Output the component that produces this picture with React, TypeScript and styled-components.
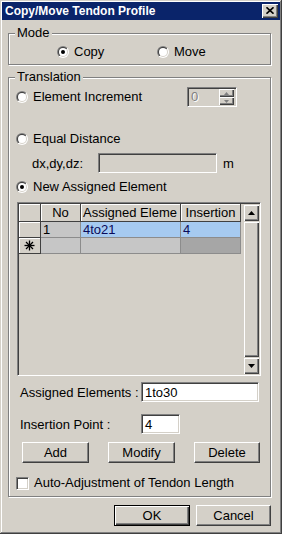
import React, { useId } from "react";
import styled, { createGlobalStyle } from "styled-components";

const GlobalStyle = createGlobalStyle`
  html, body { margin: 0; padding: 0; background: #d4d0c8; }
  body {
    font-family: "Liberation Sans", Arial, sans-serif;
    font-size: 13px;
    color: #000;
  }
  * { box-sizing: border-box; }
`;

const Window = styled.div`
  width: 282px;
  height: 534px;
  background: #d4d0c8;
  padding: 2px;
  box-shadow: inset -1px -1px 0 #404040, inset 1px 1px 0 #d4d0c8,
    inset -2px -2px 0 #808080, inset 2px 2px 0 #fff;
  display: flex;
  flex-direction: column;
`;

const TitleBar = styled.div`
  height: 18px;
  background: #0a246a;
  color: #fff;
  display: flex;
  align-items: center;
  justify-content: space-between;
  padding: 0 2px 0 3px;
`;

const Title = styled.span`
  font-weight: bold;
  font-size: 12px;
  line-height: 14px;
`;

const Raised = `
  background: #d4d0c8;
  box-shadow: inset 1px 1px 0 #fff, inset -1px -1px 0 #404040, inset -2px -2px 0 #808080;
`;

const CloseButton = styled.div`
  ${Raised}
  width: 16px;
  height: 14px;
  display: flex;
  align-items: center;
  justify-content: center;
  padding-bottom: 1px;
`;

const Body = styled.div`
  display: flex;
  flex-direction: column;
  padding: 0 9px 0 6px;
`;

const GroupBox = styled.section<{ $h: number; $top: number }>`
  position: relative;
  width: 263px;
  height: ${(p) => p.$h}px;
  margin-top: ${(p) => p.$top}px;
  border: 1px solid #808080;
  box-shadow: inset 1px 1px 0 #fff, 1px 1px 0 #fff;
  display: flex;
  flex-direction: column;
`;

const Caption = styled.span`
  position: absolute;
  top: -9px;
  left: 6px;
  padding: 0 2px;
  background: #d4d0c8;
  line-height: 15px;
`;

const ModeRow = styled.div`
  display: grid;
  grid-template-columns: 100px auto;
  padding: 10px 0 0 48px;
`;

const Option = styled.label`
  display: flex;
  align-items: center;
  gap: 5px;
  height: 16px;
  line-height: 16px;
  white-space: nowrap;
`;

const Line = styled.div<{ $top: number; $indent: number; $h: number }>`
  display: flex;
  align-items: center;
  margin-top: ${(p) => p.$top}px;
  padding-left: ${(p) => p.$indent}px;
  height: ${(p) => p.$h}px;
  white-space: nowrap;
`;

const Label = styled.span<{ $w: number }>`
  width: ${(p) => p.$w}px;
  flex: none;
`;

const Unit = styled.span`
  margin-left: 6px;
`;

const Sunken = `
  border: 1px solid;
  border-color: #808080 #fff #fff #808080;
  box-shadow: inset 1px 1px 0 #404040, inset -1px -1px 0 #d4d0c8;
`;

const Edit = styled.div<{ $w: number; $disabled?: boolean }>`
  ${Sunken}
  width: ${(p) => p.$w}px;
  height: 20px;
  padding: 0 3px;
  display: flex;
  align-items: center;
  background: ${(p) => (p.$disabled ? "#d4d0c8" : "#fff")};
  flex: none;
`;

const Spin = styled.div`
  ${Sunken}
  width: 50px;
  height: 20px;
  margin-left: auto;
  margin-right: 33px;
  padding: 1px;
  display: flex;
  background: #d4d0c8;
`;

const SpinText = styled.span`
  flex: 1;
  padding-left: 2px;
  line-height: 16px;
  color: #808080;
  text-shadow: 1px 1px 0 #fff;
`;

const SpinButtons = styled.div`
  width: 15px;
  display: flex;
  flex-direction: column;
  margin-right: 1px;
`;

const SpinButton = styled.div`
  ${Raised}
  height: 8px;
  display: flex;
  align-items: center;
  justify-content: center;
`;

const GridFrame = styled.div`
  ${Sunken}
  width: 244px;
  height: 174px;
  margin-left: 8px;
  margin-top: 7px;
  padding: 1px;
  display: flex;
  background: #d4d0c8;
`;

const Table = styled.div`
  flex: 1;
  display: grid;
  grid-template-columns: 22px 40px 100px 60px;
  grid-template-rows: 18px 16px 16px;
  align-content: start;
`;

type CellKind = "head" | "rowhead" | "sel" | "gray" | "dark";

const cellBg: Record<CellKind, string> = {
  head: "#d4d0c8",
  rowhead: "#d4d0c8",
  sel: "#a6caf0",
  gray: "#c6c6c6",
  dark: "#a6a6a6",
};

const isHead = (k: CellKind) => k === "head" || k === "rowhead";

const Cell = styled.div<{ $kind: CellKind; $center?: boolean }>`
  background: ${(p) => cellBg[p.$kind]};
  border-right: 1px solid ${(p) => (isHead(p.$kind) ? "#404040" : "#8c8c8c")};
  border-bottom: 1px solid ${(p) => (isHead(p.$kind) ? "#404040" : "#8c8c8c")};
  box-shadow: ${(p) => (isHead(p.$kind) ? "inset 1px 1px 0 #fff" : "none")};
  color: ${(p) => (p.$kind === "sel" ? "#0a0a5a" : "#000")};
  padding: 0 ${(p) => (p.$center ? 0 : 2)}px;
  display: flex;
  align-items: center;
  justify-content: ${(p) => (p.$center ? "center" : "flex-start")};
  overflow: hidden;
  white-space: nowrap;
  line-height: 15px;
`;

const ScrollBar = styled.div`
  width: 16px;
  display: flex;
  flex-direction: column;
`;

const ScrollButton = styled.div`
  background: #d4d0c8;
  box-shadow: inset 1px 1px 0 #d4d0c8, inset 2px 2px 0 #fff,
    inset -1px -1px 0 #404040, inset -2px -2px 0 #808080;
  height: 17px;
  display: flex;
  align-items: center;
  justify-content: center;
`;

const Thumb = styled(ScrollButton)`
  flex: 1;
`;

const ButtonRow = styled.div`
  display: flex;
  justify-content: space-between;
  margin-top: 8px;
  padding: 0 10px 0 13px;
`;

const Button = styled.div<{ $w: number; $default?: boolean }>`
  width: ${(p) => p.$w}px;
  height: 21px;
  background: #d4d0c8;
  display: flex;
  align-items: center;
  justify-content: center;
  border: 1px solid;
  border-color: ${(p) => (p.$default ? "#000" : "#fff #404040 #404040 #fff")};
  box-shadow: ${(p) =>
    p.$default
      ? "inset 1px 1px 0 #fff, inset -1px -1px 0 #404040, inset -2px -2px 0 #808080"
      : "inset -1px -1px 0 #808080"};
`;

const CheckBox = styled.span`
  ${Sunken}
  width: 13px;
  height: 13px;
  background: #fff;
  flex: none;
`;

const Footer = styled.div`
  display: flex;
  justify-content: flex-end;
  gap: 6px;
  margin-top: 8px;
`;

const Radio = ({ checked }: { checked?: boolean }) => {
  const id = useId().replace(/[^a-zA-Z0-9]/g, "");
  return (
    <svg width="12" height="12" viewBox="0 0 12 12" style={{ flex: "none" }}>
      <defs>
        <linearGradient id={`o${id}`} x1="0" y1="0" x2="1" y2="1">
          <stop offset="0.5" stopColor="#808080" />
          <stop offset="0.5" stopColor="#ffffff" />
        </linearGradient>
        <linearGradient id={`i${id}`} x1="0" y1="0" x2="1" y2="1">
          <stop offset="0.5" stopColor="#404040" />
          <stop offset="0.5" stopColor="#d4d0c8" />
        </linearGradient>
      </defs>
      <circle cx="6" cy="6" r="6" fill={`url(#o${id})`} />
      <circle cx="6" cy="6" r="5" fill={`url(#i${id})`} />
      <circle cx="6" cy="6" r="4" fill="#fff" />
      {checked && <circle cx="6" cy="6" r="2" fill="#000" />}
    </svg>
  );
};

const Arrow = ({ up, color = "#000", w = 7 }: { up?: boolean; color?: string; w?: number }) => {
  const h = Math.ceil(w / 2);
  return (
    <svg width={w} height={h} viewBox={`0 0 ${w} ${h}`}>
      <polygon
        points={up ? `0,${h} ${w},${h} ${w / 2},0` : `0,0 ${w},0 ${w / 2},${h}`}
        fill={color}
      />
    </svg>
  );
};

const Asterisk = () => (
  <svg width="11" height="11" viewBox="0 0 11 11">
    <g stroke="#000" strokeWidth="1.3">
      <line x1="5.5" y1="0.5" x2="5.5" y2="10.5" />
      <line x1="0.5" y1="5.5" x2="10.5" y2="5.5" />
      <line x1="2" y1="2" x2="9" y2="9" />
      <line x1="9" y1="2" x2="2" y2="9" />
    </g>
  </svg>
);

export default function App() {
  return (
    <>
      <GlobalStyle />
      <Window>
        <TitleBar>
          <Title>Copy/Move Tendon Profile</Title>
          <CloseButton>
            <svg width="8" height="7" viewBox="0 0 8 7">
              <g stroke="#000" strokeWidth="1.6">
                <line x1="0.5" y1="0.3" x2="7.5" y2="6.7" />
                <line x1="7.5" y1="0.3" x2="0.5" y2="6.7" />
              </g>
            </svg>
          </CloseButton>
        </TitleBar>
        <Body>
          <GroupBox $h={32} $top={13}>
            <Caption>Mode</Caption>
            <ModeRow>
              <Option>
                <Radio checked />
                Copy
              </Option>
              <Option>
                <Radio />
                Move
              </Option>
            </ModeRow>
          </GroupBox>

          <GroupBox $h={420} $top={12}>
            <Caption>Translation</Caption>
            <Line $top={9} $indent={7} $h={20}>
              <Option>
                <Radio />
                Element Increment
              </Option>
              <Spin>
                <SpinText>0</SpinText>
                <SpinButtons>
                  <SpinButton>
                    <Arrow up color="#808080" w={5} />
                  </SpinButton>
                  <SpinButton>
                    <Arrow color="#808080" w={5} />
                  </SpinButton>
                </SpinButtons>
              </Spin>
            </Line>
            <Line $top={24} $indent={7} $h={16}>
              <Option>
                <Radio />
                Equal Distance
              </Option>
            </Line>
            <Line $top={6} $indent={23} $h={20}>
              <Label $w={66}>dx,dy,dz:</Label>
              <Edit $w={119} $disabled />
              <Unit>m</Unit>
            </Line>
            <Line $top={6} $indent={7} $h={16}>
              <Option>
                <Radio checked />
                New Assigned Element
              </Option>
            </Line>

            <GridFrame>
              <Table>
                <Cell $kind="head" />
                <Cell $kind="head" $center>No</Cell>
                <Cell $kind="head">Assigned Eleme</Cell>
                <Cell $kind="head" $center>Insertion</Cell>

                <Cell $kind="rowhead" />
                <Cell $kind="gray">1</Cell>
                <Cell $kind="sel">4to21</Cell>
                <Cell $kind="sel">4</Cell>

                <Cell $kind="rowhead" $center>
                  <Asterisk />
                </Cell>
                <Cell $kind="gray" />
                <Cell $kind="gray" />
                <Cell $kind="dark" />
              </Table>
              <ScrollBar>
                <ScrollButton>
                  <Arrow up />
                </ScrollButton>
                <Thumb />
                <ScrollButton>
                  <Arrow />
                </ScrollButton>
              </ScrollBar>
            </GridFrame>

            <Line $top={6} $indent={11} $h={20}>
              <Label $w={121}>Assigned Elements :</Label>
              <Edit $w={118}>1to30</Edit>
            </Line>
            <Line $top={12} $indent={11} $h={20}>
              <Label $w={121}>Insertion Point :</Label>
              <Edit $w={39}>4</Edit>
            </Line>
            <ButtonRow>
              <Button $w={67}>Add</Button>
              <Button $w={67}>Modify</Button>
              <Button $w={66}>Delete</Button>
            </ButtonRow>
            <Line $top={13} $indent={7} $h={14}>
              <Option>
                <CheckBox />
                Auto-Adjustment of Tendon Length
              </Option>
            </Line>
          </GroupBox>

          <Footer>
            <Button $w={76} $default>
              OK
            </Button>
            <Button $w={75}>Cancel</Button>
          </Footer>
        </Body>
      </Window>
    </>
  );
}
